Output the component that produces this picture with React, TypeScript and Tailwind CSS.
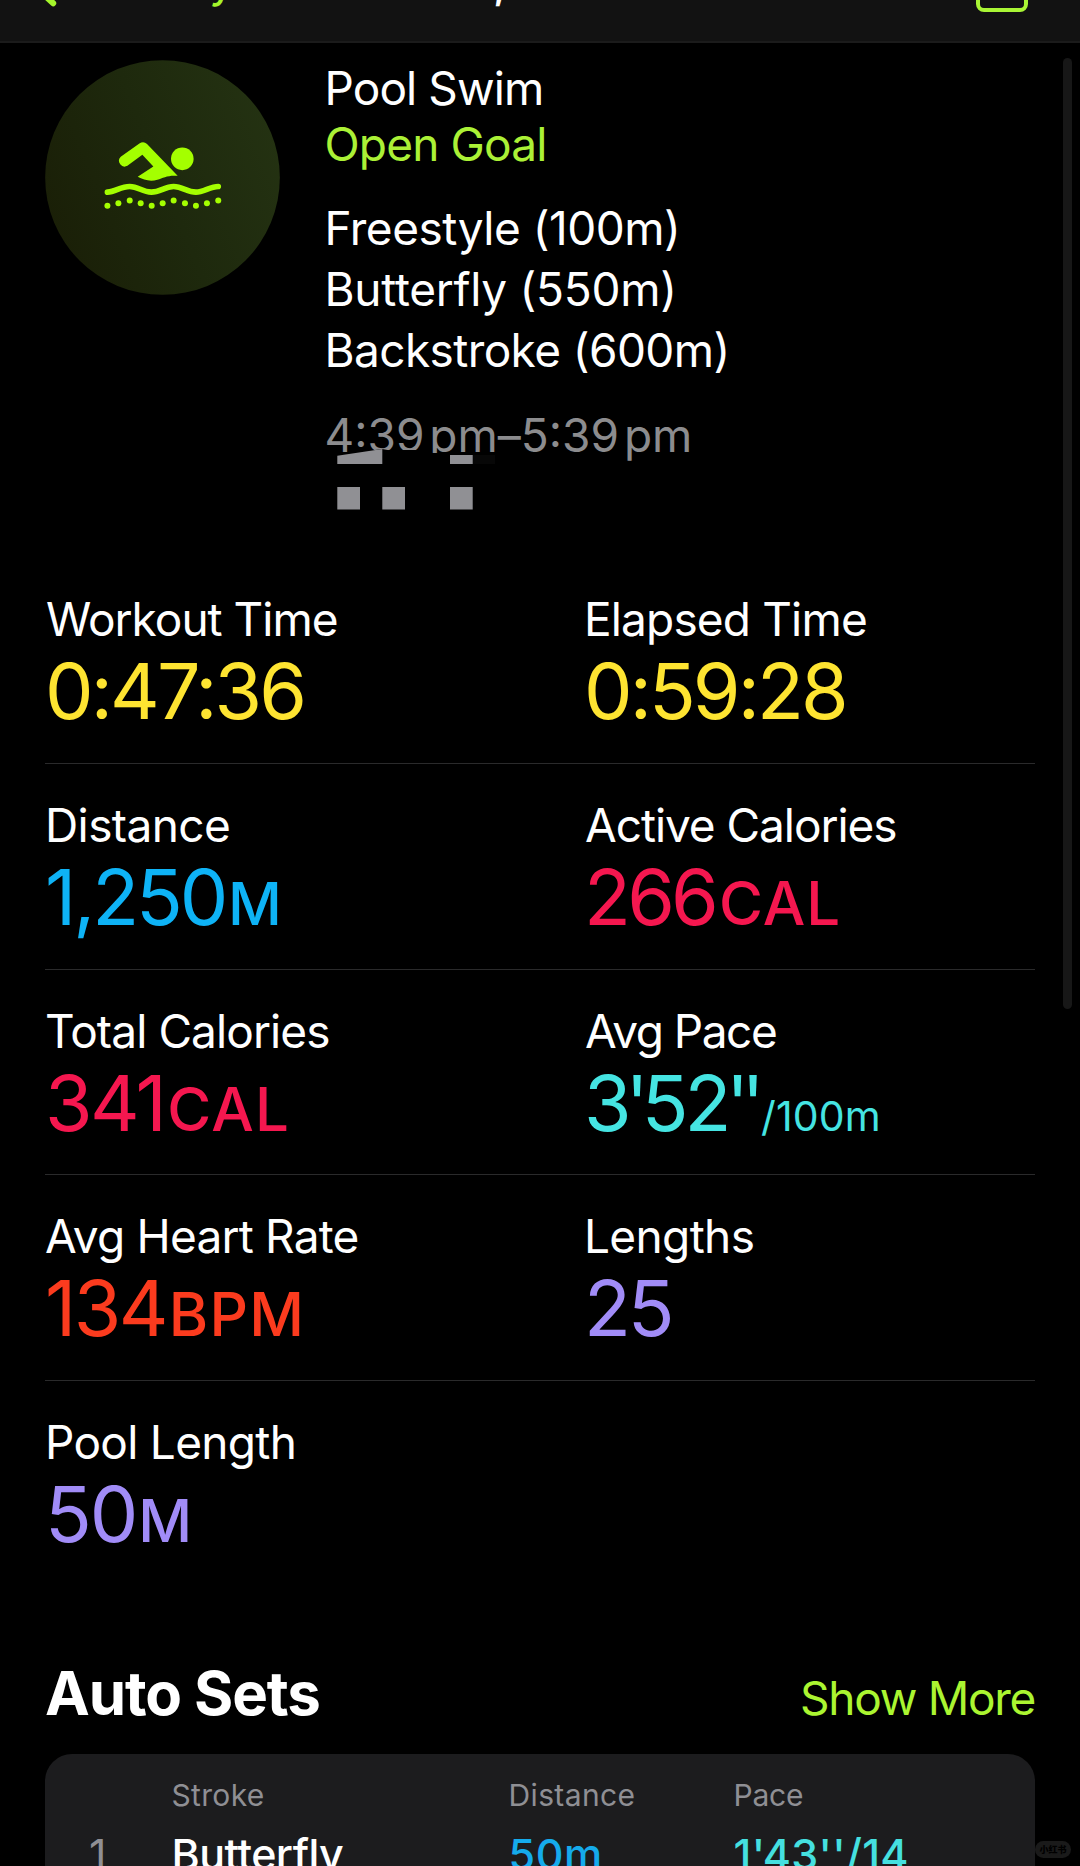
type Part = { text: string; className: string };

type Stat = {
  label: string;
  labelClass: string;
  color: string;
  parts: Part[];
};

const stats: Stat[][] = [
  [
    {
      label: "Workout Time",
      labelClass: "tracking-[-1px] pl-px",
      color: "text-[#fee431]",
      parts: [{ text: "0:47:36", className: "tracking-[-2.83px]" }],
    },
    {
      label: "Elapsed Time",
      labelClass: "tracking-[-0.84px]",
      color: "text-[#fee431]",
      parts: [{ text: "0:59:28", className: "tracking-[-2.92px]" }],
    },
  ],
  [
    {
      label: "Distance",
      labelClass: "tracking-[-0.6px]",
      color: "text-[#0eb3f6]",
      parts: [
        { text: "1,250", className: "tracking-[-3.15px]" },
        { text: "M", className: "ml-[3px] text-[59px] font-medium" },
      ],
    },
    {
      label: "Active Calories",
      labelClass: "tracking-[-1.06px] pl-px",
      color: "text-[#f5174f]",
      parts: [
        { text: "266", className: "tracking-[-3.8px]" },
        { text: "CAL", className: "ml-[4px] text-[60px] font-medium tracking-[1px]" },
      ],
    },
  ],
  [
    {
      label: "Total Calories",
      labelClass: "tracking-[-0.91px]",
      color: "text-[#f5174f]",
      parts: [
        { text: "341", className: "tracking-[-2.6px]" },
        { text: "CAL", className: "ml-[3px] text-[60px] font-medium tracking-[1.2px]" },
      ],
    },
    {
      label: "Avg Pace",
      labelClass: "tracking-[-1.47px] pl-px",
      color: "text-[#45e4e2]",
      parts: [
        { text: "3", className: "tracking-[-6px]" },
        { text: "'", className: "tracking-[-7px]" },
        { text: "5", className: "tracking-[-4px]" },
        { text: "2", className: "tracking-[-5.5px]" },
        { text: "''", className: "tracking-[-7.5px]" },
        { text: "/100m", className: "ml-[4px] text-[41px] tracking-[0.1px]" },
      ],
    },
  ],
  [
    {
      label: "Avg Heart Rate",
      labelClass: "tracking-[-0.79px]",
      color: "text-[#fb3b1e]",
      parts: [
        { text: "134", className: "tracking-[-2.6px]" },
        { text: "BPM", className: "ml-[3px] text-[60px] font-medium tracking-[1.3px]" },
      ],
    },
    {
      label: "Lengths",
      labelClass: "tracking-[-0.64px]",
      color: "text-[#a18cf7]",
      parts: [{ text: "25", className: "tracking-[-3.2px]" }],
    },
  ],
  [
    {
      label: "Pool Length",
      labelClass: "tracking-[-0.7px]",
      color: "text-[#a18cf7]",
      parts: [
        { text: "50", className: "tracking-[-2.1px]" },
        { text: "M", className: "ml-[2px] text-[59px] font-medium" },
      ],
    },
  ],
];

const bubbles = [
  [231, 467],
  [264, 459],
  [298, 451],
  [331, 459],
  [364, 467],
  [397, 459],
  [430, 451],
  [464, 459],
  [497, 467],
  [530, 459],
  [564, 451],
];

function SwimIcon() {
  return (
    <svg viewBox="44 29 705 706" className="h-[235px] w-[235px] shrink-0">
      <defs>
        <linearGradient id="swim-bg" x1="0" y1="0.7" x2="1" y2="0.3">
          <stop offset="0" stopColor="#1a1f07" />
          <stop offset="0.5" stopColor="#1e290d" />
          <stop offset="1" stopColor="#243212" />
        </linearGradient>
      </defs>
      <circle cx="396.5" cy="382" r="352.5" fill="url(#swim-bg)" />
      <g fill="#a4ff00">
        <path d="M327 280Q339 271 350 281L442 377C414 374 399 383 381 389C360 395 340 390 322 380L369 349L336 314L291 347A17 17 0 0 1 271 320Z" />
        <circle cx="456" cy="326" r="34" />
        {bubbles.map(([cx, cy]) => (
          <circle key={cx} cx={cx} cy={cy} r="9" />
        ))}
      </g>
      <path
        d="M231 426C255 426 270 409 298 409C325 409 335 426 363 426C390 426 403 409 430 409C457 409 470 426 497 426C520 426 540 409 564 409"
        fill="none"
        stroke="#a4ff00"
        strokeWidth="17"
        strokeLinecap="round"
      />
    </svg>
  );
}

/* Mosaic brush that hides the location line under the time */
function Redaction() {
  return (
    <svg viewBox="0 0 180 70" className="absolute left-[324px] top-[445px] h-[70px] w-[180px]">
      <path d="M13 10.5L58 4Q66 6 76 5H98L101 8H170V70H13Z" fill="#000" />
      <rect x="148" y="10" width="23" height="9" fill="#070707" />
      <g fill="#909094">
        <path d="M13.3 10.7L58.3 4V19H13.3Z" />
        <rect x="126" y="10" width="22.7" height="9" />
        <rect x="13.3" y="42" width="22.7" height="22.5" />
        <rect x="58.3" y="42" width="22.7" height="22.5" />
        <rect x="126" y="42" width="22.7" height="22.5" />
      </g>
    </svg>
  );
}

function StatCell({ stat }: { stat: Stat }) {
  return (
    <div className="whitespace-nowrap">
      <div className={`text-[46px] leading-[54px] ${stat.labelClass}`}>{stat.label}</div>
      <div className={`mt-[3px] flex h-[84px] items-baseline text-[77px] leading-[84px] ${stat.color}`}>
        {stat.parts.map((p, i) => (
          <span key={i} className={p.className}>
            {p.text}
          </span>
        ))}
      </div>
    </div>
  );
}

export default function App() {
  return (
    <div className="relative h-[1866px] w-[1080px] overflow-hidden bg-black font-['Inter',sans-serif] text-white">
      {/* Nav bar, scrolled mostly out of view */}
      <div className="relative h-[43px] overflow-hidden border-b-2 border-[#1b1b1b] bg-[#121212] text-[46px] leading-[56px]">
        <svg viewBox="0 0 20 10" className="absolute left-[40px] top-0 h-[10px] w-[20px]">
          <path d="M3 -6L13.2 3.2" stroke="#a4f52b" strokeWidth="6" strokeLinecap="round" />
        </svg>
        <span className="absolute left-[209px] top-[-48px] text-[#a4f52b]">y</span>
        <span className="absolute left-[493px] top-[-47px] font-medium">,</span>
        <div className="absolute left-[976px] top-[-30px] h-[42px] w-[52px] rounded-[8px] border-[4.5px] border-[#a9f535]" />
      </div>

      {/* Workout summary */}
      <div className="flex h-[515px] pl-[44.5px] pt-[17px]">
        <SwimIcon />
        <div className="ml-[45px] whitespace-nowrap text-[46px] leading-[56px]">
          <div className="tracking-[-0.9px]">Pool Swim</div>
          <div className="tracking-[-0.84px] text-[#abf136]">Open Goal</div>
          <div className="mt-[26px] leading-[61px]">
            <div className="tracking-[-0.5px]">Freestyle (100m)</div>
            <div className="tracking-[-0.28px]">Butterfly (550m)</div>
            <div className="tracking-[-0.6px]">Backstroke (600m)</div>
          </div>
          <div className="mt-[26px] text-[#8c8c8e] [word-spacing:-8px]">4:39 pm–5:39 pm</div>
        </div>
      </div>
      <Redaction />

      {/* Stats */}
      <div className="px-[45px]">
        {stats.map((row, i) => (
          <div
            key={i}
            className={`grid grid-cols-2 gap-x-[88px] pt-[34px] ${
              i < stats.length - 1 ? "h-[205.8px] border-b border-[#2a2a2b]" : "h-[175.8px]"
            }`}
          >
            {row.map((stat) => (
              <StatCell key={stat.label} stat={stat} />
            ))}
          </div>
        ))}
      </div>

      {/* Auto sets */}
      <div className="mt-[100px] flex h-[72px] items-baseline justify-between px-[45px] leading-[72px]">
        <h2 className="text-[60px] font-bold tracking-[-1.11px]">Auto Sets</h2>
        <span className="text-[46px] tracking-[-1.29px] text-[#abf531]">Show More</span>
      </div>
      <div className="mx-[45px] mt-[25px] h-[200px] rounded-[27px] bg-[#1c1c1e] pl-[44px] pt-[21px]">
        <div className="grid grid-cols-[82.5px_337px_225px_1fr] text-[30px] leading-[40px] text-[#8f8f94]">
          <span />
          <span className="tracking-[0.32px]">Stroke</span>
          <span className="tracking-[0.37px]">Distance</span>
          <span className="tracking-[-0.22px]">Pace</span>
        </div>
        <div className="mt-[11px] grid grid-cols-[82.5px_337px_225px_1fr] text-[43px] font-medium leading-[56px]">
          <span className="font-normal text-[#8f8f94]">1</span>
          <span className="tracking-[-0.53px]">Butterfly</span>
          <span className="tracking-[0.6px] text-[#15abec]">50m</span>
          <span className="tracking-[0.3px] text-[#45e0e0]">1'43''/14</span>
        </div>
      </div>

      {/* Scroll indicator */}
      <div className="absolute left-[1063px] top-[58px] h-[951px] w-[9px] rounded-full bg-[#171717]" />

      {/* Watermark */}
      <div className="absolute left-[1035px] top-[1841px] flex h-[17px] w-[36px] items-center justify-center rounded-full bg-[#1a1a1a] font-['Noto_Sans_CJK_SC',sans-serif] text-[9px] font-black leading-none text-black">
        小红书
      </div>
    </div>
  );
}
